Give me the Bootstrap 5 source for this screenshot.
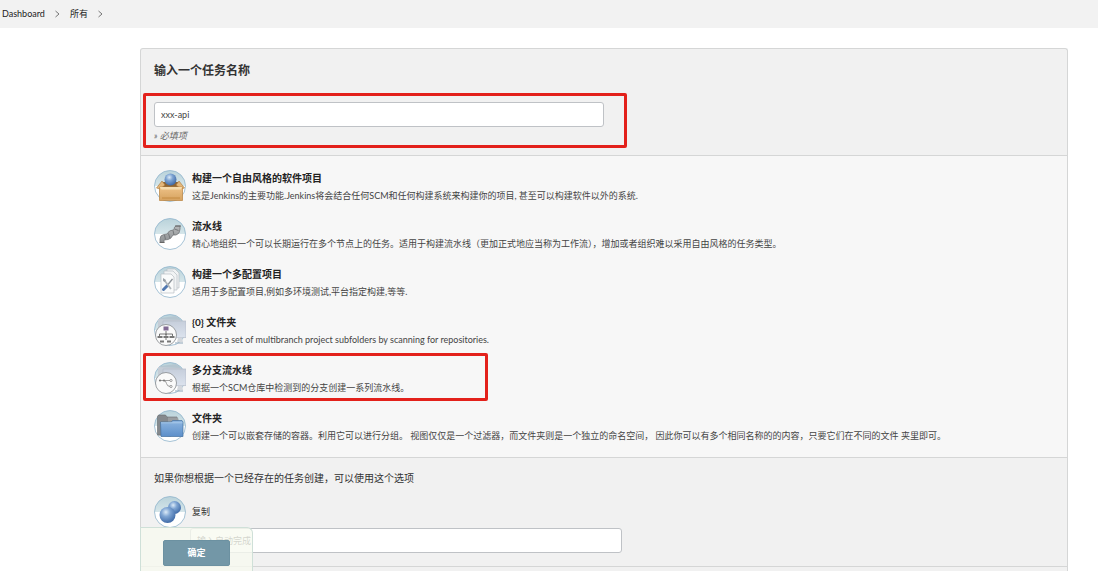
<!DOCTYPE html>
<html lang="zh-CN">
<head>
<meta charset="utf-8">
<meta name="viewport" content="width=device-width, initial-scale=1">
<title>新建任务 [Jenkins]</title>
<link href="https://cdn.jsdelivr.net/npm/bootstrap@5.3.0/dist/css/bootstrap.min.css" rel="stylesheet">
<style>
  body { font-family: Lato, "Noto Sans CJK SC", sans-serif; font-size: 9px; line-height: 12px; color: #333; background: #fff; }
  .crumbs { background: #f2f2f2; height: 28px; padding: 0 2px; gap: 10px; }
  .crumbs a { color: #222; text-decoration: none; }
  .crumbs svg { width: 5px; height: 8px; }
  .crumbs path { fill: none; stroke: #777; stroke-width: 1; }
  .job-panel { margin: 20px 30px 0 140px; background: #f1f1f1; border: 1px solid #d5d6d6; border-bottom: 0; border-radius: 3px 3px 0 0; }
  .job-panel section { padding: 0 13px; border-bottom: 1px solid #d5d6d6; }
  .name-sect { height: 107px; }
  .name-sect h1 { font-size: 12px; line-height: 18px; font-weight: 700; color: #333; margin: 13px 0 22px; }
  .name-box { width: 450px; }
  .field { height: 25px; font-size: 9px; line-height: 12px; padding: 0 6px; color: #444; border: 1px solid #bfc2c6; border-radius: 3px; background: #fff; box-shadow: none; }
  .field::placeholder { color: #555; opacity: 1; }
  .hint { font-style: italic; color: #666; margin-top: 3px; }
  .callout { position: absolute; border: 3px solid #e3211b; border-radius: 2px; pointer-events: none; }
  .callout-name { inset: -9px -23px -6px -11px; }
  .callout-item { inset: -9px auto -7px -11px; width: 345px; }
  .job-panel .kinds { background: #f7f7f7; padding-top: 14px; }
  .kind { display: flex; gap: 6px; height: 32px; margin-bottom: 16px; position: relative; cursor: pointer; }
  .kind-icon { width: 32px; height: 32px; flex: none; }
  .kind-name { display: block; font-size: 10px; line-height: 16px; font-weight: 700; color: #222; }
  .kind-desc { display: block; line-height: 12px; margin-top: 4px; color: #444; }
  .kind input { position: absolute; opacity: 0; }
  .kinds .kind:last-child { margin-bottom: 15px; }
  .copy-sect { height: 109px; }
  .copy-sect p { font-size: 10px; line-height: 14px; margin: 13px 0 11px; }
  .copy-sect label { margin: 0; }
  .copy-field { margin: 0 0 0 36px; width: 432px; }
  .ok-bar { position: fixed; left: 140px; bottom: 0; padding: 12px 22px 5px; background: rgba(247,250,240,.78); border: 1px solid #cfe0d8; border-bottom: 0; border-radius: 0 6px 0 0; }
  .ok-bar .btn { width: 67px; height: 26px; padding: 0; font-size: 9px; line-height: 12px; font-weight: 700; color: #fff; background: #7397a7; border: 1px solid #6c91a1; border-radius: 2px; }
</style>
</head>
<body class="d-flex flex-column min-vh-100">
<svg width="0" height="0" class="position-absolute" aria-hidden="true">
  <defs>
    <linearGradient id="sky" x2="0" y2="1"><stop offset="0" stop-color="#b9d2da"/><stop offset="1" stop-color="#d6e6ea"/></linearGradient>
    <linearGradient id="wood" x2="0" y2="1"><stop offset="0" stop-color="#eec287"/><stop offset="1" stop-color="#d6a25f"/></linearGradient>
    <linearGradient id="steel" x2="0" y2="1"><stop offset="0" stop-color="#b5b7b8"/><stop offset="1" stop-color="#8e9193"/></linearGradient>
    <linearGradient id="screen" x2="0" y2="1"><stop offset="0" stop-color="#c6cedb"/><stop offset="1" stop-color="#dce3ee"/></linearGradient>
    <linearGradient id="folder" x2="0" y2="1"><stop offset="0" stop-color="#8db5e0"/><stop offset="1" stop-color="#5c8fca"/></linearGradient>
    <radialGradient id="ball" cx=".4" cy=".32" r=".7"><stop offset="0" stop-color="#dcebf8"/><stop offset=".4" stop-color="#7fa5d3"/><stop offset="1" stop-color="#3e69a6"/></radialGradient>
    <g id="disc"><circle cx="16" cy="16" r="15.500" fill="#fff"/><path d="M.5 16a15.500 15.500 0 0 1 31 0z" fill="url(#sky)"/><circle cx="16" cy="16" r="15.500" fill="none" stroke="#8fb4cc" stroke-width=".8"/></g>
    <g id="monitor"><path d="M6 4l16-2 4 3v3H6z" fill="#b4c5cf"/><path d="M4 5l23 1v17L4 21z" fill="#c5cdd6"/><path d="M9 7h23v16.500L9 24z" fill="url(#screen)" stroke="#b4bcc9" stroke-width=".7"/><path d="M24 24h4l1 4h-6z" fill="#d4d8dd"/><path d="M21 29h8" stroke="#8da4b7"/></g>
  </defs>
</svg>

<nav class="crumbs d-flex align-items-center" aria-label="breadcrumb">
  <a href="#">Dashboard</a>
  <svg viewBox="0 0 5 8"><path d="M.5 1l3.500 3-3.500 3"/></svg>
  <a href="#">所有</a>
  <svg viewBox="0 0 5 8"><path d="M.5 1l3.500 3-3.500 3"/></svg>
</nav>

<form class="job-panel flex-grow-1">
  <section class="name-sect d-flex flex-column">
    <h1><label for="name">输入一个任务名称</label></h1>
    <div class="name-box position-relative">
      <input id="name" class="form-control field" type="text" value="xxx-api">
      <div class="hint">» 必填项</div>
      <div class="callout callout-name"></div>
    </div>
  </section>

  <section class="kinds">
    <label class="kind">
      <input type="radio" name="mode">
      <svg class="kind-icon" viewBox="0 0 32 32"><use href="#disc"/><path d="M8 12h17l3 5H5z" fill="#8d6535"/><circle cx="16.500" cy="9.500" r="6" fill="url(#ball)"/><path d="M8 11L2.500 18l3.500 1 5-4z" fill="#e4b77a" stroke="#a8773a" stroke-width=".6"/><path d="M25 11l5.500 7-3.500 1-5-4z" fill="#e4b77a" stroke="#a8773a" stroke-width=".6"/><path d="M5.500 17h23v13.500h-23z" fill="url(#wood)" stroke="#b8813d" stroke-width=".7"/><path d="M5.500 17h23l-2 2.500h-19z" fill="#f6dcae"/><path d="M8 28h18" stroke="#c48a40"/></svg>
      <span><span class="kind-name">构建一个自由风格的软件项目</span><span class="kind-desc">这是Jenkins的主要功能.Jenkins将会结合任何SCM和任何构建系统来构建你的项目, 甚至可以构建软件以外的系统.</span></span>
    </label>
    <label class="kind">
      <input type="radio" name="mode">
      <svg class="kind-icon" viewBox="0 0 32 32"><use href="#disc"/><path d="M6 24v-3q0-4 4-4.500l3-.5q2-4 6-4l1-.5q0-3 2-3.500h4v3q0 5-4 6h-3q-2 4-5 4.500l-4 .5v2.500z" fill="url(#steel)" stroke="#76797b" stroke-width=".8"/><path d="M10.500 17l1 4.500M14.500 15.500l1.500 5M19 12.500l1 4.500M20.500 11l4 1.500" fill="none" stroke="#686c6e" stroke-width=".8"/><path d="M21 8h6M5.500 24.500h5" stroke="#666"/></svg>
      <span><span class="kind-name">流水线</span><span class="kind-desc">精心地组织一个可以长期运行在多个节点上的任务。适用于构建流水线（更加正式地应当称为工作流），增加或者组织难以采用自由风格的任务类型。</span></span>
    </label>
    <label class="kind">
      <input type="radio" name="mode">
      <svg class="kind-icon" viewBox="0 0 32 32"><use href="#disc"/><g fill="#f1f3f4" stroke="#b8bfc4" stroke-width=".7"><path d="M13 3h8l4 4v15H13z"/><path d="M10 5h9l4 4v15H10z"/><path d="M7 8h10l3 3v16H7z" fill="#fafbfb"/></g><path d="M9.500 23.500l4-4" stroke="#5279b0" stroke-width="3" stroke-linecap="round"/><path d="M14 18.500l4.500-5.500" stroke="#8b9299" stroke-width="1.300"/><path d="M10.500 14.500l6.500 8.500" stroke="#b2b8bd" stroke-width="1.800"/><path d="M9 12v3l2 1 1-2z" fill="#9aa1a7"/></svg>
      <span><span class="kind-name">构建一个多配置项目</span><span class="kind-desc">适用于多配置项目,例如多环境测试,平台指定构建,等等.</span></span>
    </label>
    <label class="kind">
      <input type="radio" name="mode">
      <svg class="kind-icon" viewBox="0 0 32 32"><use href="#disc"/><use href="#monitor"/><circle cx="12" cy="21" r="10.500" fill="#fafafa" stroke="#85898d" stroke-width=".8"/><path d="M12 17v4M5.500 22.500V20h13v2.500M12 20v6" fill="none" stroke="#555" stroke-width=".8"/><path d="M9.500 12.500h5v4h-5z" fill="#816a94"/><g fill="#777"><path d="M3.500 22h5v2h-5zM9.500 22h5v2h-5zM15.500 22h5v2h-5zM6 26.500h4v2H6zM13 26.500h4v2h-4z"/></g></svg>
      <span><span class="kind-name">{0} 文件夹</span><span class="kind-desc">Creates a set of multibranch project subfolders by scanning for repositories.</span></span>
    </label>
    <label class="kind">
      <input type="radio" name="mode">
      <svg class="kind-icon" viewBox="0 0 32 32"><use href="#disc"/><use href="#monitor"/><circle cx="12" cy="21" r="10.500" fill="#fafafa" stroke="#85898d" stroke-width=".8"/><path d="M5 18.500h12M9.500 18.500q2.500 0 3 3t4 3" fill="none" stroke="#888" stroke-width=".8"/><circle cx="6" cy="18.500" r="1.100" fill="#777"/><circle cx="10" cy="18.500" r="1.100" fill="#777"/><circle cx="17" cy="18.500" r="1.100" fill="#fff" stroke="#777" stroke-width=".7"/><circle cx="17" cy="24.500" r="1.100" fill="#fff" stroke="#777" stroke-width=".7"/></svg>
      <span><span class="kind-name">多分支流水线</span><span class="kind-desc">根据一个SCM仓库中检测到的分支创建一系列流水线。</span></span>
      <span class="callout callout-item"></span>
    </label>
    <label class="kind">
      <input type="radio" name="mode">
      <svg class="kind-icon" viewBox="0 0 32 32"><use href="#disc"/><path d="M3.500 6.500l1-1.500h7l1.500 2h10v5h-6v14l-13.500-1z" fill="#85898d" stroke="#65696c" stroke-width=".6"/><path d="M14 7.500h9.500l1 1.500v3H14z" fill="#9a9ea1"/><path d="M6.500 12h11l1-1.500h9.500l1 1.500v14.500h-22z" fill="url(#folder)" stroke="#44709f" stroke-width=".7"/><path d="M7 12.800h21.500" stroke="#b3d0ee" stroke-width=".8"/></svg>
      <span><span class="kind-name">文件夹</span><span class="kind-desc">创建一个可以嵌套存储的容器。利用它可以进行分组。 视图仅仅是一个过滤器，而文件夹则是一个独立的命名空间， 因此你可以有多个相同名称的的内容，只要它们在不同的文件 夹里即可。</span></span>
    </label>
  </section>

  <section class="copy-sect d-flex flex-column">
    <p>如果你想根据一个已经存在的任务创建，可以使用这个选项</p>
    <label class="kind align-items-center" for="from">
      <svg class="kind-icon" viewBox="0 0 32 32"><use href="#disc"/><circle cx="20.500" cy="11.500" r="6.500" fill="url(#ball)"/><circle cx="13.500" cy="19" r="8" fill="url(#ball)"/></svg>
      <span>复制</span>
    </label>
    <input id="from" class="form-control field copy-field" type="text" placeholder="输入自动完成">
  </section>

  <div class="ok-bar"><button type="submit" class="btn">确定</button></div>
</form>
<script src="https://cdn.jsdelivr.net/npm/bootstrap@5.3.0/dist/js/bootstrap.bundle.min.js"></script>
</body>
</html>
